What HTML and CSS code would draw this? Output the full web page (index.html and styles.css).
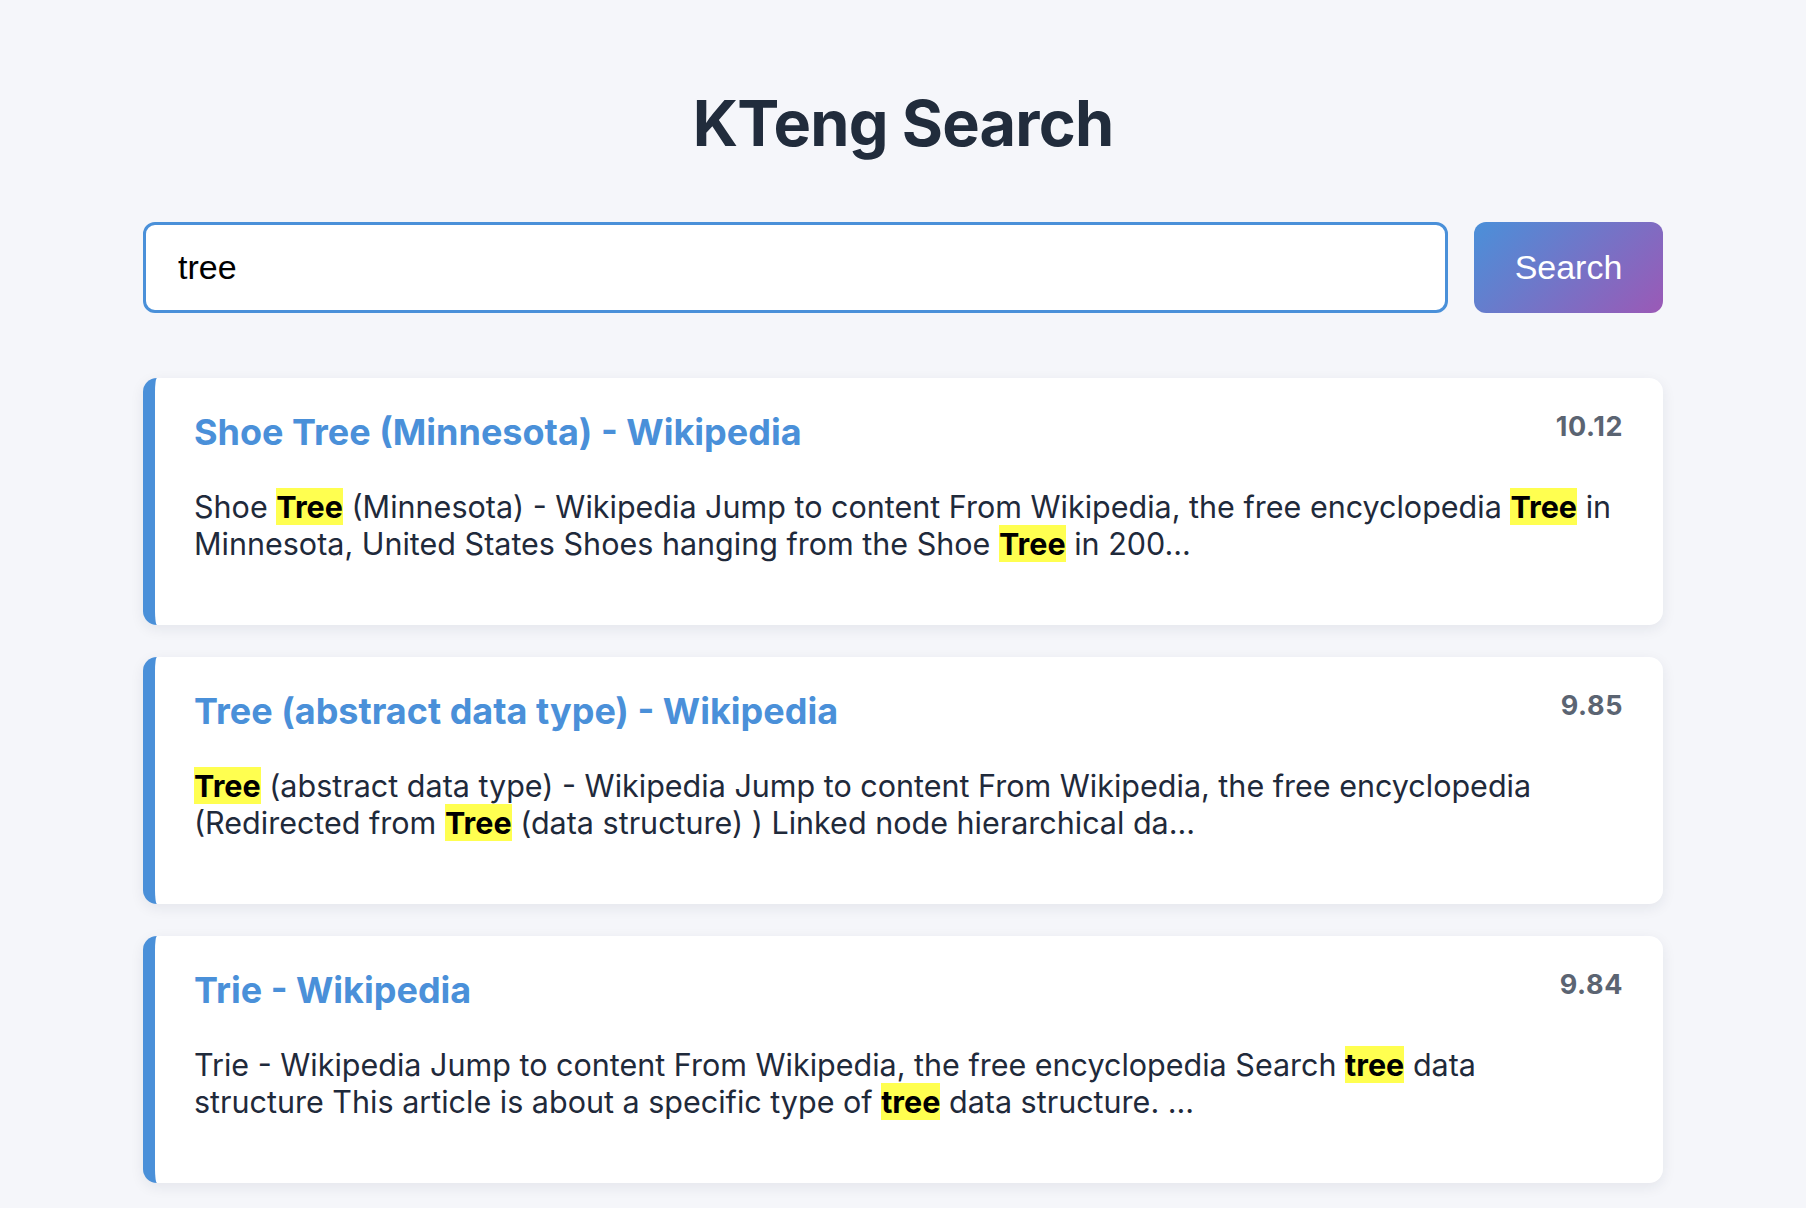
FILE: index.html
```html
<!DOCTYPE html>
<html lang="en">
<head>
<meta charset="utf-8">
<title>KTeng Search</title>
<link rel="stylesheet" href="styles.css">
</head>
<body>
<div class="container">
  <h1 class="brand">KTeng Search</h1>
  <form class="search-row" onsubmit="return false">
    <input class="search-input" type="text" value="tree">
    <button class="search-btn" type="submit">Search</button>
  </form>
  <div class="results">
    <div class="result">
      <div class="result-head">
        <a class="result-title" href="#">Shoe Tree (Minnesota) - Wikipedia</a>
        <span class="score">10.12</span>
      </div>
      <p class="snippet">Shoe <mark>Tree</mark> (Minnesota) - Wikipedia Jump to content From Wikipedia, the free encyclopedia <mark>Tree</mark> in Minnesota, United States Shoes hanging from the Shoe <mark>Tree</mark> in 200...</p>
    </div>
    <div class="result">
      <div class="result-head">
        <a class="result-title" href="#">Tree (abstract data type) - Wikipedia</a>
        <span class="score">9.85</span>
      </div>
      <p class="snippet"><mark>Tree</mark> (abstract data type) - Wikipedia Jump to content From Wikipedia, the free encyclopedia (Redirected from <mark>Tree</mark> (data structure) ) Linked node hierarchical da...</p>
    </div>
    <div class="result">
      <div class="result-head">
        <a class="result-title" href="#">Trie - Wikipedia</a>
        <span class="score">9.84</span>
      </div>
      <p class="snippet">Trie - Wikipedia Jump to content From Wikipedia, the free encyclopedia Search <mark>tree</mark> data structure This article is about a specific type of <mark>tree</mark> data structure. ...</p>
    </div>
  </div>
</div>
</body>
</html>
```

FILE: styles.css
```css
* { box-sizing: border-box; }
html, body {
  margin: 0;
  padding: 0;
  background: #f5f6fa;
}
body {
  font-family: Inter, "Noto Sans", sans-serif;
  color: #1f2a3b;
}
.container {
  max-width: 1520px;
  margin: 0 auto;
  padding-top: 85px;
  padding-bottom: 40px;
}
.brand {
  margin: 0;
  text-align: center;
  font-size: 63px;
  font-weight: 700;
  letter-spacing: -0.8px;
  line-height: normal;
  color: #212c3c;
}
.search-row {
  display: flex;
  gap: 26px;
  margin: 61px 0 65px;
}
.search-input {
  flex: 1;
  height: 91px;
  border: 3px solid #4a90d9;
  border-radius: 12px;
  padding: 0 32px;
  font-family: "Liberation Sans", Arial, sans-serif;
  font-size: 34px;
  color: #000;
  background: #fff;
  outline: none;
}
.search-btn {
  width: 189px;
  height: 91px;
  border: none;
  border-radius: 12px;
  background: linear-gradient(135deg, #4a90d9 0%, #9b59b6 100%);
  color: #fff;
  font-family: "Liberation Sans", Arial, sans-serif;
  font-size: 34px;
  cursor: pointer;
}
.results {
  display: flex;
  flex-direction: column;
  gap: 32px;
}
.result {
  background: #fff;
  border-left: 12px solid #4a90d9;
  border-radius: 14px;
  padding: 32px 40px 63px 39px;
  box-shadow: 0 4px 14px rgba(30, 40, 70, 0.08);
}
.result-head {
  display: flex;
  justify-content: space-between;
  align-items: flex-start;
}
.result-title {
  font-size: 36px;
  font-weight: 700;
  color: #4a90d9;
  text-decoration: none;
  line-height: normal;
}
.score {
  font-size: 27px;
  font-weight: 700;
  letter-spacing: 0.6px;
  color: #5b6472;
  line-height: normal;
}
.snippet {
  margin: 34px 0 0;
  padding-right: 10px;
  font-size: 30.5px;
  line-height: normal;
  color: #1f2a3b;
}
.snippet mark {
  background: #ffff50;
  color: #000;
  font-weight: 700;
}
```
